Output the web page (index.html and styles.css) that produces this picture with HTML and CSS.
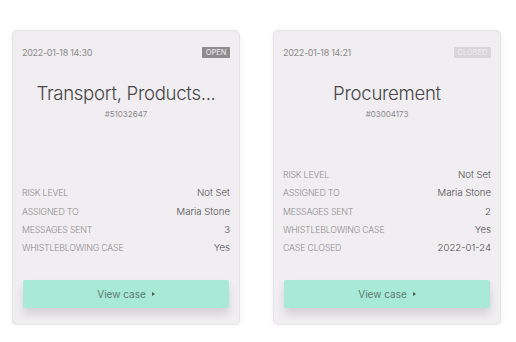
FILE: index.html
```html
<!DOCTYPE html>
<html lang="en">
<head>
    <meta charset="UTF-8">
    <meta name="viewport" content="width=device-width, initial-scale=1.0">
    <title>Cases</title>
    <link rel="stylesheet" href="styles.css">
</head>
<body>
    <div class="cases">
        <div class="card">
            <div class="card-head">
                <span class="date">2022-01-18 14:30</span>
                <span class="badge open">OPEN</span>
            </div>
            <h2 class="title">Transport, Products...</h2>
            <div class="code">#51032647</div>
            <div class="rows">
                <div class="row"><span class="label">Risk level</span><span class="value">Not Set</span></div>
                <div class="row"><span class="label">Assigned to</span><span class="value">Maria Stone</span></div>
                <div class="row"><span class="label">Messages sent</span><span class="value">3</span></div>
                <div class="row"><span class="label">Whistleblowing case</span><span class="value">Yes</span></div>
            </div>
            <button class="view-btn">View case <span class="arrow"></span></button>
        </div>

        <div class="card">
            <div class="card-head">
                <span class="date">2022-01-18 14:21</span>
                <span class="badge closed">CLOSED</span>
            </div>
            <h2 class="title">Procurement</h2>
            <div class="code">#03004173</div>
            <div class="rows">
                <div class="row"><span class="label">Risk level</span><span class="value">Not Set</span></div>
                <div class="row"><span class="label">Assigned to</span><span class="value">Maria Stone</span></div>
                <div class="row"><span class="label">Messages sent</span><span class="value">2</span></div>
                <div class="row"><span class="label">Whistleblowing case</span><span class="value">Yes</span></div>
                <div class="row"><span class="label">Case closed</span><span class="value">2022-01-24</span></div>
            </div>
            <button class="view-btn">View case <span class="arrow"></span></button>
        </div>
    </div>
</body>
</html>
```

FILE: styles.css
```css
body {
    margin: 0;
    background-color: #ffffff;
    font-family: 'Inter', 'Liberation Sans', sans-serif;
}
.cases {
    display: flex;
    gap: 33px;
    padding: 30px 0 0 12px;
}
.card {
    width: 228px;
    height: 295px;
    box-sizing: border-box;
    display: flex;
    flex-direction: column;
    padding: 16px 9px 16px 9px;
    background-color: #f0eef0;
    border: 1px solid #e4e2e4;
    border-radius: 5px;
    box-shadow: 0 2px 6px rgba(0,0,0,0.06);
}
.card-head {
    display: flex;
    justify-content: space-between;
    align-items: center;
    height: 11px;
}
.date {
    font-size: 9px;
    color: #8c8a8c;
    letter-spacing: -0.3px;
}
.badge {
    font-size: 7.5px;
    line-height: 11px;
    padding: 0 3.5px;
    border-radius: 1px;
    color: #f0eef0;
}
.badge.open {
    background-color: #8e8c8e;
}
.badge.closed {
    background-color: #d8d6d8;
}
.title {
    margin: 23px 0 0;
    font-size: 18.6px;
    line-height: 24px;
    font-weight: 300;
    color: #484648;
    text-align: center;
    letter-spacing: -0.3px;
}
.code {
    margin-top: 3px;
    font-size: 8px;
    line-height: 12px;
    color: #8c8a8c;
    text-align: center;
}
.rows {
    margin-top: auto;
}
.row {
    display: flex;
    justify-content: space-between;
    align-items: center;
    height: 18.4px;
}
.label {
    font-size: 8.8px;
    font-weight: 300;
    text-transform: uppercase;
    color: #8e8c8e;
    letter-spacing: -0.2px;
}
.value {
    font-size: 9.6px;
    font-weight: 300;
    color: #4e4c4e;
}
.view-btn {
    margin: 23px 1px 0;
    height: 28px;
    border: none;
    border-radius: 2px;
    background-color: #a8ead6;
    color: #5e7a71;
    font-family: inherit;
    font-size: 10px;
    display: flex;
    align-items: center;
    justify-content: center;
    gap: 6px;
    box-shadow: 0 6px 8px rgba(0,0,0,0.12);
    cursor: pointer;
}
.arrow {
    width: 0;
    height: 0;
    border-top: 2.5px solid transparent;
    border-bottom: 2.5px solid transparent;
    border-left: 3px solid #4c5c56;
}
```
